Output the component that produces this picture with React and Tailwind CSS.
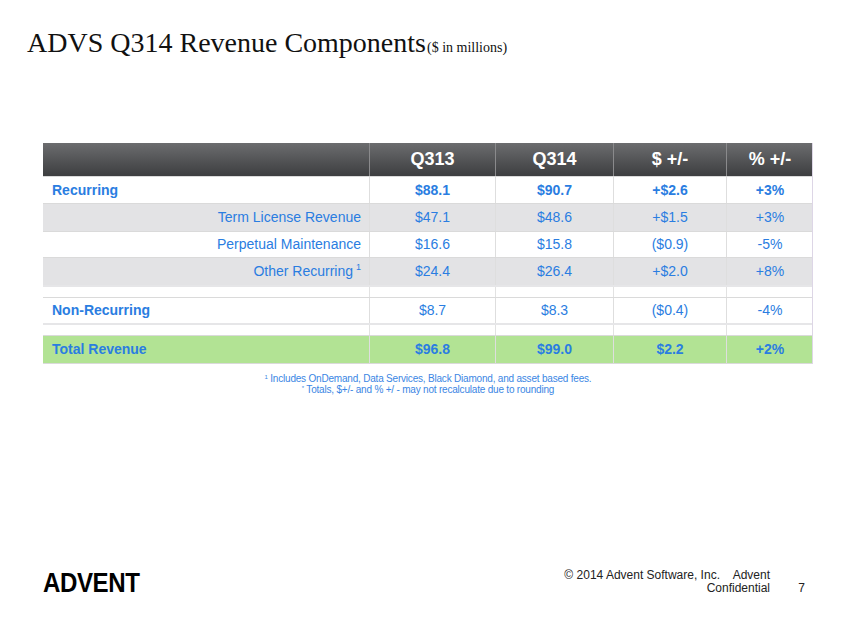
import React from 'react'

const rows = [
  { label: 'Recurring', vals: ['$88.1', '$90.7', '+$2.6', '+3%'], bold: true, left: true, bg: 'bg-white', h: 'h-[27px]' },
  { label: 'Term License Revenue', vals: ['$47.1', '$48.6', '+$1.5', '+3%'], bg: 'bg-[#e3e3e5]', h: 'h-[28px]' },
  { label: 'Perpetual Maintenance', vals: ['$16.6', '$15.8', '($0.9)', '-5%'], bg: 'bg-white', h: 'h-[26px]' },
  { label: 'Other Recurring', sup: '1', vals: ['$24.4', '$26.4', '+$2.0', '+8%'], bg: 'bg-[#e3e3e5]', h: 'h-[28px]' },
  { spacer: true },
  { label: 'Non-Recurring', vals: ['$8.7', '$8.3', '($0.4)', '-4%'], boldLabel: true, left: true, bg: 'bg-white', h: 'h-[26px]' },
  { spacer: true },
  { label: 'Total Revenue', vals: ['$96.8', '$99.0', '$2.2', '+2%'], bold: true, left: true, bg: 'bg-[#b2e394]', h: 'h-[28px]' },
]

const cols = 'grid grid-cols-[326px_126px_118px_113px_87px]'

const App = () => {
  return (
    <div className='w-[847px] h-[635px] bg-white relative overflow-hidden font-["Liberation_Sans",Arial,sans-serif]'>
      <div className='pl-[27px] pt-[22px] h-[143px] font-["Liberation_Serif","DejaVu_Serif",serif] text-[#111]'>
        <span className='text-[28px]'>ADVS Q314 Revenue Components</span>
        <span className='text-[14px] ml-[1px]'>($ in millions)</span>
      </div>

      <div className='ml-[43px] w-[770px] border-r border-[#ddd6e6]'>
        <div className={`${cols} h-[33px] bg-gradient-to-b from-[#6c6d6f] to-[#3d3e40] text-white font-bold text-[18px]`}>
          <div></div>
          {['Q313', 'Q314', '$ +/-', '% +/-'].map((t) => (
            <div key={t} className='flex items-center justify-center border-l border-[#8a8a8c]'>{t}</div>
          ))}
        </div>

        {rows.map((r, i) =>
          r.spacer ? (
            <div key={i} className={`${cols} h-[12px] bg-white border-t-2 border-[#e6e6e8]`}>
              <div></div>
              <div className='border-l border-[#e2e2e2]'></div>
              <div className='border-l border-[#e2e2e2]'></div>
              <div className='border-l border-[#e2e2e2]'></div>
              <div className='border-l border-[#e2e2e2]'></div>
            </div>
          ) : (
            <div key={i} className={`${cols} ${r.h} ${r.bg} border-t border-[#dadada] text-[#2a7de1] text-[14px]`}>
              <div className={`flex items-center ${r.left ? 'justify-start pl-[9px]' : 'justify-end pr-[8px]'} ${r.bold || r.boldLabel ? 'font-bold' : ''}`}>
                {r.label}
                {r.sup && <sup className='text-[9px] ml-[3px] -top-[5px]'>{r.sup}</sup>}
              </div>
              {r.vals.map((v, j) => (
                <div key={j} className={`flex items-center justify-center border-l border-[#dedede] ${r.bold ? 'font-bold' : ''}`}>{v}</div>
              ))}
            </div>
          )
        )}
        <div className='border-t border-[#dadada]'></div>
      </div>

      <div className='ml-[43px] w-[770px] mt-[9px] flex flex-col items-center text-[#3a86e4] text-[10px] leading-[11px] tracking-[-0.2px]'>
        <p><sup className='text-[6px]'>1</sup> Includes OnDemand, Data Services, Black Diamond, and asset based fees.</p>
        <p><sup className='text-[6px]'>*</sup> Totals, $+/- and % +/ - may not recalculate due to rounding</p>
      </div>

      <div className='absolute left-[43px] top-[562px] text-[28px] font-bold text-black tracking-[-0.5px] font-["Liberation_Sans_Narrow","Liberation_Sans",Arial,sans-serif] scale-x-[0.86] origin-left'>
        ADVENT
      </div>
      <div className='absolute left-[548px] top-[569px] w-[262px] flex justify-between text-[12px] leading-[13px] text-[#222]'>
        <div className='text-right w-[222px]'>
          © 2014 Advent Software, Inc.&nbsp;&nbsp;&nbsp; Advent<br />Confidential
        </div>
        <div className='self-end pr-[5px]'>7</div>
      </div>
    </div>
  )
}

export default App
